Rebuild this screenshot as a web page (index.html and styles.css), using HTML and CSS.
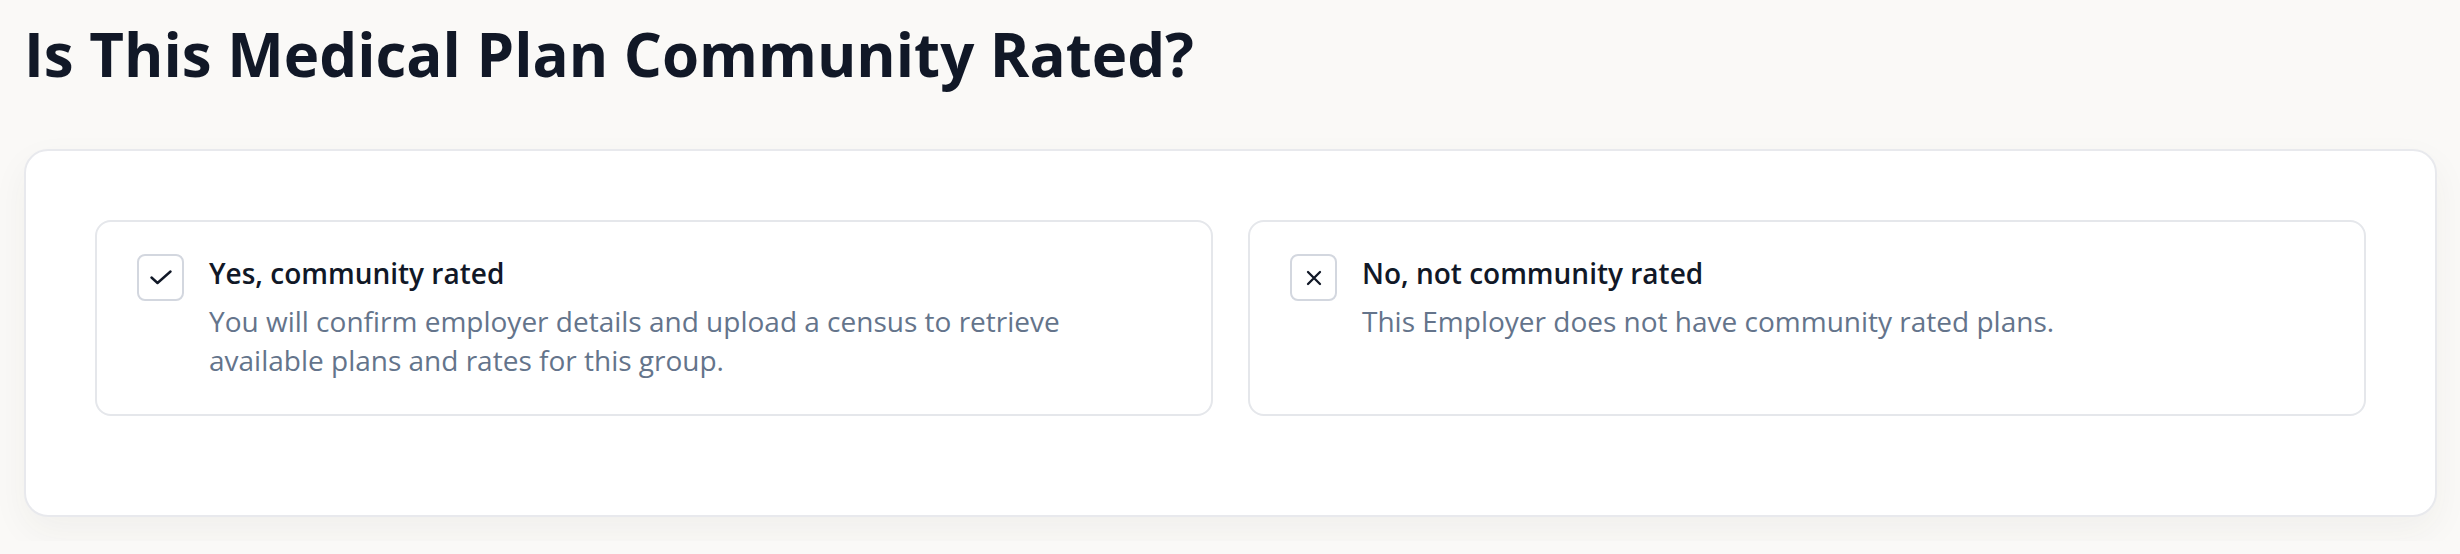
FILE: index.html
```html
<!DOCTYPE html>
<html lang="en">
<head>
<meta charset="utf-8">
<title>Community Rated</title>
<link rel="stylesheet" href="styles.css">
</head>
<body>
<main class="page">
  <h1 class="heading">Is This Medical Plan Community Rated?</h1>
  <section class="panel">
    <div class="options">
      <div class="option">
        <span class="box">
          <svg class="icon-check" width="22" height="15" viewBox="0 0 22 15"><polyline points="1.5,7.5 7.5,13 20.5,1.5" fill="none" stroke="#111827" stroke-width="2.4" stroke-linecap="round" stroke-linejoin="round"/></svg>
        </span>
        <div class="text">
          <div class="title">Yes, community rated</div>
          <p class="desc">You will confirm employer details and upload a census to retrieve available plans and rates for this group.</p>
        </div>
      </div>
      <div class="option">
        <span class="box">
          <svg class="icon-x" width="16" height="16" viewBox="0 0 16 16"><path d="M2 2L14 14M14 2L2 14" fill="none" stroke="#111827" stroke-width="2.3" stroke-linecap="round"/></svg>
        </span>
        <div class="text">
          <div class="title">No, not community rated</div>
          <p class="desc">This Employer does not have community rated plans.</p>
        </div>
      </div>
    </div>
  </section>
</main>
</body>
</html>
```

FILE: styles.css
```css
html, body {
  margin: 0;
  padding: 0;
  background: #faf9f7;
}
body {
  font-family: "Open Sans", "Noto Sans", "Liberation Sans", sans-serif;
  color: #111827;
}
.page {
  padding: 18px 23px 24px 24px;
}
.heading {
  margin: 0 0 59px 0;
  font-size: 60px;
  line-height: 72px;
  font-weight: 700;
  color: #111827;
  letter-spacing: 0;
}
.panel {
  background: #ffffff;
  border: 2px solid #e8e9ed;
  border-radius: 24px;
  padding: 69px 69px 99px 69px;
  box-shadow: 0 14px 36px rgba(60, 50, 30, 0.05);
}
.options {
  display: grid;
  grid-template-columns: 1fr 1fr;
  gap: 35px;
}
.option {
  display: flex;
  align-items: flex-start;
  gap: 25px;
  border: 2px solid #e5e7eb;
  border-radius: 16px;
  padding: 32px 40px 34px 40px;
  min-height: 125px;
}
.box {
  flex: 0 0 auto;
  width: 43px;
  height: 43px;
  border: 2px solid #d3d7df;
  border-radius: 8px;
  display: flex;
  align-items: center;
  justify-content: center;
  background: #ffffff;
}
.text {
  flex: 1 1 auto;
  min-width: 0;
}
.title {
  font-size: 28px;
  line-height: 39px;
  font-weight: 600;
  color: #111827;
}
.desc {
  margin: 9px 0 0 0;
  font-size: 28px;
  line-height: 39px;
  font-weight: 400;
  color: #64748b;
}
```
